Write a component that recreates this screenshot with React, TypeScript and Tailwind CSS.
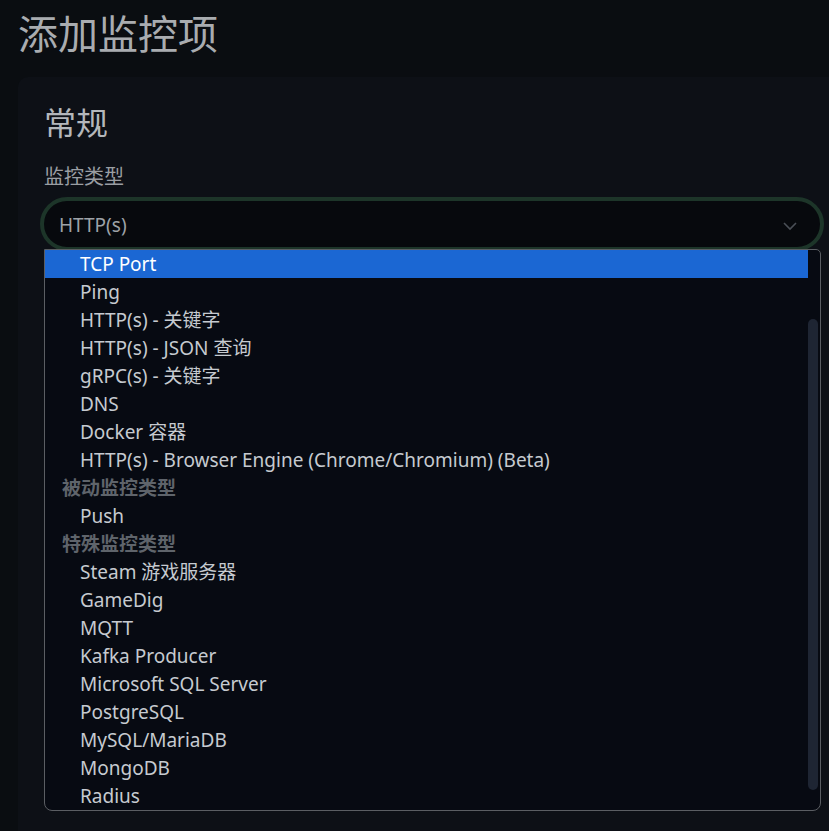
import React from "react";

type Row = { label: string; group?: boolean; active?: boolean };

const rows: Row[] = [
  { label: "TCP Port", active: true },
  { label: "Ping" },
  { label: "HTTP(s) - 关键字" },
  { label: "HTTP(s) - JSON 查询" },
  { label: "gRPC(s) - 关键字" },
  { label: "DNS" },
  { label: "Docker 容器" },
  { label: "HTTP(s) - Browser Engine (Chrome/Chromium) (Beta)" },
  { label: "被动监控类型", group: true },
  { label: "Push" },
  { label: "特殊监控类型", group: true },
  { label: "Steam 游戏服务器" },
  { label: "GameDig" },
  { label: "MQTT" },
  { label: "Kafka Producer" },
  { label: "Microsoft SQL Server" },
  { label: "PostgreSQL" },
  { label: "MySQL/MariaDB" },
  { label: "MongoDB" },
  { label: "Radius" },
];

export default function App() {
  return (
    <div
      className="h-[831px] w-[829px] overflow-hidden bg-[#0a0d11] text-[#a9acb0]"
      style={{ fontFamily: '"Noto Sans", "Noto Sans CJK SC", sans-serif' }}
    >
      <h1 className="pl-[18px] pt-[8px] text-[40px] leading-[52px] text-[#a9acb0]">添加监控项</h1>

      {/* Card */}
      <div className="ml-[18px] mt-[17px] h-[800px] w-[840px] rounded-[10px] bg-[#0d1016] pl-[26px] pt-[24px]">
        <h2 className="text-[32px] leading-[44px] text-[#b4b7bb]">常规</h2>
        <label className="mt-[18px] block text-[20px] leading-[28px] text-[#9a9ea3]">监控类型</label>

        <div className="relative mt-[6px] w-[784px] -ml-[4px]">
          <div className="flex h-[54px] items-center rounded-full border-[4px] border-[#1d3529] bg-[#07090d] pl-[15px] pr-[22px] pt-[3px]">
            <span className="flex-1 text-[19px] text-[#9ea2a7]">HTTP(s)</span>
            <svg width="16" height="16" viewBox="0 0 16 16" fill="none" stroke="#4a4f56" strokeWidth="1.6">
              <path d="M2 5l6 6 6-6" />
            </svg>
          </div>

          {/* Open list */}
          <div className="absolute left-[4px] top-[52px] w-[777px] overflow-hidden rounded-b-[8px] rounded-tr-[5px] border border-[#5b5e63] bg-[#070a12]">
            <div className="relative flex">
              <div className="flex-1">
                {rows.map((r) =>
                  r.group ? (
                    <div key={r.label} className="h-[28px] pl-[17px] text-[19px] font-bold leading-[28px] text-[#5f646b]">
                      {r.label}
                    </div>
                  ) : (
                    <div
                      key={r.label}
                      className={
                        r.active
                          ? "h-[28px] bg-[#1b67d3] pl-[35px] text-[19px] leading-[28px] text-white"
                          : "h-[28px] pl-[35px] text-[19px] leading-[28px] text-[#c6cad0]"
                      }
                    >
                      {r.label}
                    </div>
                  )
                )}
              </div>
              <div className="w-[12px] pt-[69px] pb-[20px] pr-[1px]">
                <div className="h-[471px] w-[10px] rounded-full bg-[#1e2533]" />
              </div>
            </div>
          </div>
        </div>
      </div>
    </div>
  );
}
